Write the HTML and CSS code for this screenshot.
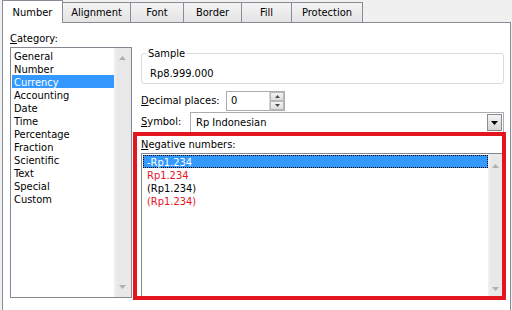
FILE: index.html
```html
<!DOCTYPE html>
<html lang="en">
<head>
    <meta charset="UTF-8">
    <title>Format Cells</title>
    <link rel="stylesheet" href="styles.css">
</head>
<body>
    <div class="dialog">
        <div class="tabs">
            <div class="tab active tab-number">Number</div>
            <div class="tab tab-alignment">Alignment</div>
            <div class="tab tab-font">Font</div>
            <div class="tab tab-border">Border</div>
            <div class="tab tab-fill">Fill</div>
            <div class="tab tab-protection">Protection</div>
        </div>

        <div class="panel">
            <div class="category">
                <div class="label"><u>C</u>ategory:</div>
                <div class="listbox category-list">
                    <div class="items">
                        <div class="item">General</div>
                        <div class="item">Number</div>
                        <div class="item selected">Currency</div>
                        <div class="item">Accounting</div>
                        <div class="item">Date</div>
                        <div class="item">Time</div>
                        <div class="item">Percentage</div>
                        <div class="item">Fraction</div>
                        <div class="item">Scientific</div>
                        <div class="item">Text</div>
                        <div class="item">Special</div>
                        <div class="item">Custom</div>
                    </div>
                    <div class="scrollbar">
                        <svg width="7" height="4" viewBox="0 0 7 4"><polygon points="0,4 3.5,0 7,4" fill="#b0b0b0"/></svg>
                        <svg width="7" height="4" viewBox="0 0 7 4"><polygon points="0,0 7,0 3.5,4" fill="#b0b0b0"/></svg>
                    </div>
                </div>
            </div>

            <div class="format">
                <fieldset class="sample">
                    <legend>Sample</legend>
                    <div class="sample-value">Rp8.999.000</div>
                </fieldset>

                <div class="row decimal-row">
                    <div class="row-label decimal-label"><u>D</u>ecimal places:</div>
                    <div class="spin">
                        <div class="spin-value">0</div>
                        <div class="spin-buttons">
                            <div class="spin-btn">
                                <svg width="5" height="3" viewBox="0 0 5 3"><polygon points="0,3 2.5,0 5,3" fill="#4a4a4a"/></svg>
                            </div>
                            <div class="spin-btn">
                                <svg width="5" height="3" viewBox="0 0 5 3"><polygon points="0,0 5,0 2.5,3" fill="#4a4a4a"/></svg>
                            </div>
                        </div>
                    </div>
                </div>

                <div class="row symbol-row">
                    <div class="row-label symbol-label"><u>S</u>ymbol:</div>
                    <div class="combo">
                        <div class="combo-value">Rp Indonesian</div>
                        <div class="combo-btn">
                            <svg width="7" height="4" viewBox="0 0 7 4"><polygon points="0,0 7,0 3.5,4" fill="#000"/></svg>
                        </div>
                    </div>
                </div>

                <div class="highlight">
                    <div class="label neg-label"><u>N</u>egative numbers:</div>
                    <div class="listbox neg-list">
                        <div class="items">
                            <div class="item selected focused">-Rp1.234</div>
                            <div class="item red">Rp1.234</div>
                            <div class="item">(Rp1.234)</div>
                            <div class="item red">(Rp1.234)</div>
                        </div>
                        <div class="scrollbar narrow">
                            <svg width="7" height="4" viewBox="0 0 7 4"><polygon points="0,4 3.5,0 7,4" fill="#b0b0b0"/></svg>
                            <svg width="7" height="4" viewBox="0 0 7 4"><polygon points="0,0 7,0 3.5,4" fill="#b0b0b0"/></svg>
                        </div>
                    </div>
                </div>
            </div>
        </div>
    </div>
</body>
</html>
```

FILE: styles.css
```css
body {
    margin: 0;
    background-color: #f0f0f0;
    font-family: "DejaVu Sans Condensed", "DejaVu Sans", sans-serif;
    font-size: 11px;
    line-height: 13px;
    color: #000;
    width: 512px;
    height: 310px;
    overflow: hidden;
}

.dialog {
    padding: 0 1px 0 2px;
}

/* tab strip */
.tabs {
    display: flex;
    align-items: flex-end;
    height: 22px;
}

.tab {
    box-sizing: border-box;
    height: 20px;
    border: 1px solid #898c95;
    border-bottom: none;
    background: linear-gradient(#f3f3f3, #e4e4e4);
    margin-left: -1px;
    text-align: center;
    line-height: 20px;
}

.tab.active {
    height: 23px;
    margin-left: 0;
    margin-bottom: -1px;
    background: #fff;
    line-height: 24px;
    position: relative;
    z-index: 1;
}

.tab-number { width: 61px; }
.tab-alignment { width: 69px; }
.tab-font { width: 54px; }
.tab-border { width: 59px; }
.tab-fill { width: 51px; }
.tab-protection { width: 72px; }

/* main panel */
.panel {
    box-sizing: border-box;
    height: 288px;
    background: #fff;
    border: 1px solid #898c95;
    border-bottom: none;
    display: flex;
    padding: 9px 0 0 7px;
}

.category {
    width: 122px;
}

.label {
    height: 13px;
}

.listbox {
    box-sizing: border-box;
    display: flex;
    border: 1px solid #828790;
}

.category-list {
    margin-top: 2px;
    height: 251px;
}

.items {
    flex: 1;
    padding: 1px 0 0 1px;
}

.category-list .item {
    line-height: 15px;
}

.item {
    height: 13px;
    padding-left: 2px;
    white-space: nowrap;
}

.item.selected {
    background: #3399ff;
    color: #fff;
}

.item.red {
    color: #e5141e;
}

.scrollbar {
    width: 17px;
    background: linear-gradient(90deg, #f2f2f2, #e8e8e8 3px);
    display: flex;
    flex-direction: column;
    justify-content: space-between;
    align-items: center;
    padding: 8px 0 8px;
    box-sizing: border-box;
}

.scrollbar.narrow {
    width: 14px;
    padding: 10px 0 5px;
}

/* right side */
.format {
    width: 373px;
    margin-left: 1px;
    display: flex;
    flex-direction: column;
}

.sample {
    margin: 15px 2px 0 8px;
    padding: 0 4px 3px;
    border: 1px solid #d5dbe0;
    border-radius: 3px;
    min-width: 0;
}

.sample legend {
    padding: 0 2px;
    line-height: 13px;
}

.sample-value {
    margin: 7px 0 0 4px;
}

.row {
    display: flex;
    align-items: center;
    height: 20px;
    margin-left: 8px;
}

.decimal-row {
    margin-top: 7px;
}

.symbol-row {
    margin-top: 1px;
    height: 20px;
    align-items: flex-start;
}

.row-label {
    line-height: 20px;
}

.decimal-label {
    width: 85px;
}

.symbol-label {
    width: 49px;
}

.spin {
    box-sizing: border-box;
    display: flex;
    width: 59px;
    height: 20px;
    border: 1px solid #abadb3;
}

.spin-value {
    flex: 1;
    padding-left: 4px;
    line-height: 18px;
}

.spin-buttons {
    width: 14px;
    display: flex;
    flex-direction: column;
    border-left: 1px solid #d6d6d6;
}

.spin-btn {
    flex: 1;
    display: flex;
    align-items: center;
    justify-content: center;
    background: linear-gradient(#f4f4f4, #dcdcdc);
    border: 1px solid #b8b8b8;
}

.combo {
    box-sizing: border-box;
    display: flex;
    width: 314px;
    height: 21px;
    border: 1px solid #abadb3;
    border-bottom: none;
}

.combo-value {
    flex: 1;
    padding-left: 5px;
    line-height: 19px;
}

.combo-btn {
    width: 15px;
    height: 17px;
    margin: 1px 1px 0 0;
    box-sizing: border-box;
    border: 1px solid #8a8a8a;
    background: linear-gradient(#f3f3f3, #d6d6d6);
    display: flex;
    align-items: center;
    justify-content: center;
}

/* red annotation frame */
.highlight {
    box-sizing: border-box;
    height: 168px;
    border: 4px solid #e3161f;
    padding-left: 4px;
    display: flex;
    flex-direction: column;
}

.neg-label {
    margin-top: 2px;
}

.neg-list {
    flex: 1;
    margin-top: 2px;
    border-right: none;
    border-bottom: none;
}

.neg-list .items {
    padding: 1px 0 0 1px;
}

.neg-list .item {
    box-sizing: border-box;
    padding-left: 3px;
    border: 1px solid transparent;
    line-height: 13px;
}

.item.focused {
    border: 1px dotted #000;
}
```
